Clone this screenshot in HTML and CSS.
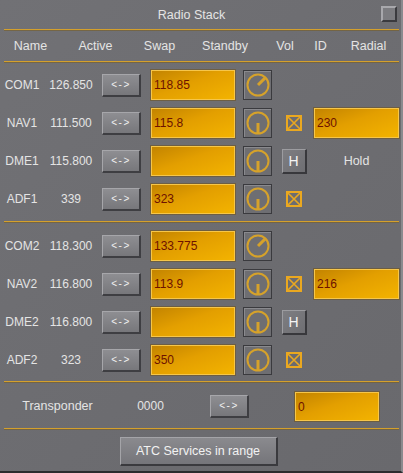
FILE: index.html
```html
<!DOCTYPE html>
<html>
<head>
<meta charset="utf-8">
<link rel="stylesheet" href="styles.css">
</head>
<body>
<div class="win">
  <div class="titlebar">
    <div class="title">Radio Stack</div>
    <div class="close"></div>
  </div>
  <div class="rule"></div>
  <div class="head">
    <span>Name</span><span>Active</span><span>Swap</span><span>Standby</span><span>Vol</span><span>ID</span><span class="hr">Radial</span>
  </div>
  <div class="rule"></div>

  <div class="section s1">
    <div class="row">
      <span class="name">COM1</span><span class="act">126.850</span><button class="swap">&lt;-&gt;</button>
      <div class="inp">118.85</div>
      <div class="knob"><svg width="24" height="24" viewBox="0 0 24 24"><circle cx="12" cy="12" r="10.5" /><line x1="12" y1="12" x2="19.4" y2="4.6" /></svg></div>
      <span></span><span></span>
    </div>
    <div class="row">
      <span class="name">NAV1</span><span class="act">111.500</span><button class="swap">&lt;-&gt;</button>
      <div class="inp">115.8</div>
      <div class="knob"><svg width="24" height="24" viewBox="0 0 24 24"><circle cx="12" cy="12" r="10.5" /><line x1="12" y1="12" x2="12" y2="22.5" /></svg></div>
      <span class="chk"><svg width="16" height="16" viewBox="0 0 16 16"><rect x="1" y="1" width="14" height="14" /><path d="M1 1 L15 15 M15 1 L1 15" /></svg></span>
      <div class="inp">230</div>
    </div>
    <div class="row">
      <span class="name">DME1</span><span class="act">115.800</span><button class="swap">&lt;-&gt;</button>
      <div class="inp"></div>
      <div class="knob"><svg width="24" height="24" viewBox="0 0 24 24"><circle cx="12" cy="12" r="10.5" /><line x1="12" y1="12" x2="12" y2="22.5" /></svg></div>
      <span class="cell"><button class="hbtn">H</button></span>
      <span class="hold">Hold</span>
    </div>
    <div class="row">
      <span class="name">ADF1</span><span class="act">339</span><button class="swap">&lt;-&gt;</button>
      <div class="inp">323</div>
      <div class="knob"><svg width="24" height="24" viewBox="0 0 24 24"><circle cx="12" cy="12" r="10.5" /><line x1="12" y1="12" x2="12" y2="22.5" /></svg></div>
      <span class="chk"><svg width="16" height="16" viewBox="0 0 16 16"><rect x="1" y="1" width="14" height="14" /><path d="M1 1 L15 15 M15 1 L1 15" /></svg></span>
      <span></span>
    </div>
  </div>
  <div class="rule"></div>

  <div class="section s2">
    <div class="row">
      <span class="name">COM2</span><span class="act">118.300</span><button class="swap">&lt;-&gt;</button>
      <div class="inp">133.775</div>
      <div class="knob"><svg width="24" height="24" viewBox="0 0 24 24"><circle cx="12" cy="12" r="10.5" /><line x1="12" y1="12" x2="19.4" y2="4.6" /></svg></div>
      <span></span><span></span>
    </div>
    <div class="row">
      <span class="name">NAV2</span><span class="act">116.800</span><button class="swap">&lt;-&gt;</button>
      <div class="inp">113.9</div>
      <div class="knob"><svg width="24" height="24" viewBox="0 0 24 24"><circle cx="12" cy="12" r="10.5" /><line x1="12" y1="12" x2="12" y2="22.5" /></svg></div>
      <span class="chk"><svg width="16" height="16" viewBox="0 0 16 16"><rect x="1" y="1" width="14" height="14" /><path d="M1 1 L15 15 M15 1 L1 15" /></svg></span>
      <div class="inp">216</div>
    </div>
    <div class="row">
      <span class="name">DME2</span><span class="act">116.800</span><button class="swap">&lt;-&gt;</button>
      <div class="inp"></div>
      <div class="knob"><svg width="24" height="24" viewBox="0 0 24 24"><circle cx="12" cy="12" r="10.5" /><line x1="12" y1="12" x2="12" y2="22.5" /></svg></div>
      <span class="cell"><button class="hbtn">H</button></span>
      <span></span>
    </div>
    <div class="row">
      <span class="name">ADF2</span><span class="act">323</span><button class="swap">&lt;-&gt;</button>
      <div class="inp">350</div>
      <div class="knob"><svg width="24" height="24" viewBox="0 0 24 24"><circle cx="12" cy="12" r="10.5" /><line x1="12" y1="12" x2="12" y2="22.5" /></svg></div>
      <span class="chk"><svg width="16" height="16" viewBox="0 0 16 16"><rect x="1" y="1" width="14" height="14" /><path d="M1 1 L15 15 M15 1 L1 15" /></svg></span>
      <span></span>
    </div>
  </div>
  <div class="rule"></div>

  <div class="xpdr">
    <span class="xname">Transponder</span>
    <span class="xcode">0000</span>
    <button class="swap">&lt;-&gt;</button>
    <div class="inp xinp">0</div>
  </div>
  <div class="rule"></div>

  <div class="atc">
    <button class="atcbtn">ATC Services in range</button>
  </div>
</div>
</body>
</html>
```

FILE: styles.css
```css
html, body {
  margin: 0;
  padding: 0;
}
body {
  width: 403px;
  height: 473px;
  overflow: hidden;
  background: #6c6c70;
  font-family: "Liberation Sans", Arial, sans-serif;
  font-size: 12px;
  color: #e4e4e4;
}
.win {
  width: 403px;
  height: 473px;
  box-sizing: border-box;
  background: linear-gradient(135deg, #717175 0%, #6c6c70 60%, #69696d 100%);
  border-right: 2px solid #8a8a8e;
  border-bottom: 2px solid #2c2c2e;
}
.titlebar {
  height: 29px;
  display: flex;
  align-items: center;
}
.title {
  flex: 1;
  text-align: center;
  font-size: 12.5px;
  padding-left: 2px;
  padding-top: 1px;
}
.close {
  width: 12px;
  height: 12px;
  margin: 0 4px 2px 0;
  background: #7c7c80;
  border-top: 2px solid #a8a8ac;
  border-left: 2px solid #a8a8ac;
  border-right: 2px solid #3a3a3e;
  border-bottom: 2px solid #3a3a3e;
}
.rule {
  height: 1px;
  margin: 0 2px 0 4px;
  background: #d4a02c;
  box-shadow: 0 1px 0 rgba(120, 95, 40, 0.6);
}
.head {
  height: 31px;
  display: grid;
  grid-template-columns: 61px 69px 59px 72px 48px 23px 1fr;
  align-items: center;
  text-align: center;
  font-size: 12.5px;
}
.head .hr {
  padding-left: 4px;
}
.section {
  display: flex;
  flex-direction: column;
  gap: 8px;
}
.s1 {
  padding: 8px 0 7px;
}
.s2 {
  padding: 9px 0 6px;
}
.row {
  height: 30px;
  display: grid;
  grid-template-columns: 44px 54px 43px 94px 37px 42px 85px;
  align-items: center;
}
.name, .act {
  text-align: center;
}
.swap {
  justify-self: end;
  width: 39px;
  height: 23px;
  padding: 0;
  font-family: "Liberation Sans", Arial, sans-serif;
  font-size: 10px;
  letter-spacing: 1.5px;
  color: #f0f0f0;
  background: linear-gradient(180deg, #8e8e92, #77777b);
  border-top: 1px solid #a6a6aa;
  border-left: 1px solid #a6a6aa;
  border-right: 2px solid #3e3e42;
  border-bottom: 2px solid #3e3e42;
  box-sizing: border-box;
}
.inp {
  justify-self: end;
  width: 84px;
  height: 30px;
  box-sizing: border-box;
  border: 1px solid #f6c64a;
  box-shadow: 0 0 0 1px rgba(110, 80, 20, 0.5);
  background: linear-gradient(160deg, #c38400 0%, #e39f00 45%, #f3b300 100%);
  color: #6e1200;
  font-size: 12px;
  padding: 7px 0 0 2px;
}
.row .inp:last-child {
  width: 85px;
}
.knob {
  justify-self: end;
  width: 29px;
  height: 30px;
  box-sizing: border-box;
  border: 1px solid #3a3a3e;
  box-shadow: inset 1px 1px 0 #8a8a8e;
  background: #6e6e72;
  display: flex;
  align-items: center;
  justify-content: center;
}
.knob svg {
  display: block;
}
.knob circle {
  fill: none;
  stroke: #d6a22a;
  stroke-width: 2;
}
.knob line {
  stroke: #d6a22a;
  stroke-width: 3;
}
.chk {
  justify-self: center;
  display: flex;
  padding-left: 2px;
}
.chk rect {
  fill: none;
  stroke: #eaa820;
  stroke-width: 2;
}
.chk path {
  fill: none;
  stroke: #eaa820;
  stroke-width: 1.6;
}
.cell {
  display: flex;
  justify-content: center;
  padding-left: 2px;
}
.hbtn {
  width: 25px;
  height: 25px;
  padding: 0;
  box-sizing: border-box;
  font-family: "Liberation Sans", Arial, sans-serif;
  font-size: 14px;
  color: #f4f4f4;
  background: linear-gradient(135deg, #7e7e82, #6e6e72);
  border-top: 1px solid #9c9ca0;
  border-left: 1px solid #9c9ca0;
  border-right: 2px solid #38383c;
  border-bottom: 2px solid #38383c;
}
.hold {
  text-align: center;
  font-size: 12.5px;
}
.xpdr {
  height: 46px;
  display: grid;
  grid-template-columns: 115px 71px 63px 130px;
  align-items: center;
  padding-top: 2px;
  box-sizing: border-box;
}
.xname {
  text-align: center;
  font-size: 12.5px;
}
.xcode {
  text-align: center;
}
.xpdr .swap {
  justify-self: end;
}
.xinp {
  height: 29px;
  justify-self: end;
}
.atc {
  display: flex;
  justify-content: center;
  padding-top: 8px;
  padding-right: 4px;
}
.atcbtn {
  width: 158px;
  height: 29px;
  padding: 0;
  box-sizing: border-box;
  font-family: "Liberation Sans", Arial, sans-serif;
  font-size: 12.5px;
  color: #f2f2f2;
  background: linear-gradient(180deg, #8a8a8e, #75757a);
  border-top: 1px solid #a4a4a8;
  border-left: 1px solid #a4a4a8;
  border-right: 2px solid #3a3a3e;
  border-bottom: 2px solid #3a3a3e;
}
```
